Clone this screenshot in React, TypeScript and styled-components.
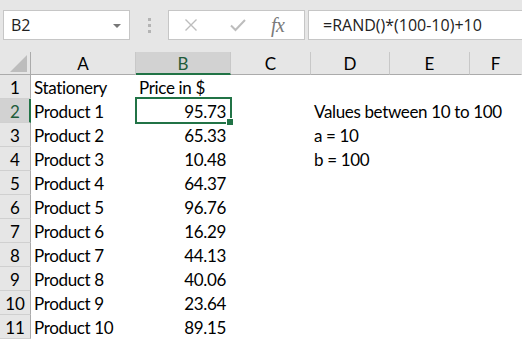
import React from "react";
import styled, { createGlobalStyle, css } from "styled-components";

const Global = createGlobalStyle`
  html, body { margin: 0; padding: 0; background: #ffffff; overflow: hidden; }
  * { box-sizing: border-box; }
`;

const GREEN = "#217346";
const CELL_FONT = `"Lato", "Carlito", "Liberation Sans", sans-serif`;
const UI_FONT = `"Open Sans", "Noto Sans", "Liberation Sans", sans-serif`;

const Frame = styled.div`
  width: 522px;
  height: 342px;
  overflow: hidden;
  background: #ffffff;
  display: flex;
  flex-direction: column;
`;

const TopBar = styled.div`
  height: 52px;
  flex: none;
  background: #e6e6e6;
  display: flex;
  align-items: flex-start;
  padding: 10px 0 0 3px;
`;

const NameBox = styled.div`
  width: 127px;
  height: 30px;
  background: #ffffff;
  border: 1px solid #c6c6c6;
  display: flex;
  align-items: center;
  justify-content: space-between;
  padding: 0 8px 0 7px;
  font-family: ${UI_FONT};
  font-size: 16px;
  color: #222;
`;

const DropArrow = styled.span`
  width: 0;
  height: 0;
  border-left: 4px solid transparent;
  border-right: 4px solid transparent;
  border-top: 4px solid #777;
  margin-top: 1px;
`;

const Dots = styled.div`
  width: 38px;
  height: 30px;
  display: flex;
  flex-direction: column;
  align-items: center;
  justify-content: center;
  gap: 3px;
  & span {
    width: 3px;
    height: 3px;
    background: #b4b4b4;
  }
`;

const IconBox = styled.div`
  width: 137px;
  height: 30px;
  background: #ffffff;
  border: 1px solid #c6c6c6;
  display: flex;
  align-items: center;
  padding-left: 15px;
`;

const IconSlot = styled.div<{ $w: number }>`
  width: ${(p) => p.$w}px;
  display: flex;
  align-items: center;
  justify-content: flex-start;
`;

const Fx = styled.span`
  font-family: "Liberation Serif", "DejaVu Serif", serif;
  font-style: italic;
  font-size: 20px;
  color: #7a7a7a;
  line-height: 1;
  letter-spacing: -0.5px;
  margin-left: -3px;
`;

const FormulaBox = styled.div`
  flex: 1;
  height: 30px;
  margin-left: 3px;
  margin-right: -4px;
  background: #ffffff;
  border: 1px solid #c6c6c6;
  display: flex;
  align-items: center;
  padding-left: 14px;
  font-family: ${UI_FONT};
  font-size: 16px;
  color: #222;
`;

const Grid = styled.div`
  display: grid;
  grid-template-columns: 31px 105px 95px 80px 79px 80px 1fr;
  grid-template-rows: 23px repeat(11, 24px);
  font-family: ${CELL_FONT};
  font-size: 17px;
  color: #000;
`;

const Corner = styled.div`
  background: #e6e6e6;
  border-right: 1px solid #ababab;
  border-bottom: 1px solid #ababab;
  display: flex;
  align-items: flex-end;
  justify-content: flex-end;
  padding: 0 3px 2px 0;
`;

const ColHead = styled.div<{ $sel?: boolean; $last?: boolean }>`
  background: ${(p) => (p.$sel ? "#d2d2d2" : "#e6e6e6")};
  border-right: 1px solid ${(p) => (p.$last ? "transparent" : "#c8c8c8")};
  border-bottom: ${(p) => (p.$sel ? `2px solid ${GREEN}` : "1px solid #ababab")};
  display: flex;
  align-items: center;
  justify-content: center;
  padding-top: ${(p) => (p.$sel ? 1 : 0)}px;
  color: ${(p) => (p.$sel ? "#1f5c3a" : "#000")};
  line-height: 1;
`;

const RowHead = styled.div<{ $sel?: boolean }>`
  background: ${(p) => (p.$sel ? "#d2d2d2" : "#e6e6e6")};
  border-right: ${(p) => (p.$sel ? `2px solid ${GREEN}` : "1px solid #ababab")};
  border-bottom: 1px solid #d0d0d0;
  display: flex;
  align-items: flex-end;
  justify-content: center;
  padding-bottom: 2px;
  padding-left: ${(p) => (p.$sel ? 1 : 0)}px;
  color: ${(p) => (p.$sel ? "#1f5c3a" : "#000")};
  line-height: 1;
`;

const Cell = styled.div<{ $num?: boolean; $sel?: boolean }>`
  position: relative;
  display: flex;
  align-items: flex-end;
  justify-content: ${(p) => (p.$num ? "flex-end" : "flex-start")};
  padding: 0 ${(p) => (p.$num ? 5 : 0)}px 3px ${(p) => (p.$num ? 0 : 3)}px;
  white-space: nowrap;
  line-height: 1;
  letter-spacing: -0.35px;
  overflow: visible;
  ${(p) =>
    p.$sel &&
    css`
      &::after {
        content: "";
        position: absolute;
        left: -1px;
        top: -2px;
        right: -1px;
        bottom: -1px;
        border: 2px solid ${GREEN};
        pointer-events: none;
      }
      &::before {
        content: "";
        position: absolute;
        right: -3px;
        bottom: -3px;
        width: 6px;
        height: 6px;
        background: ${GREEN};
        border: 1px solid #fff;
        z-index: 2;
      }
    `}
`;

const cols = ["A", "B", "C", "D", "E", "F"];

const rows: { a: string; b: string; d?: string }[] = [
  { a: "Stationery", b: "Price in $" },
  { a: "Product 1", b: "95.73", d: "Values between 10 to 100" },
  { a: "Product 2", b: "65.33", d: "a = 10" },
  { a: "Product 3", b: "10.48", d: "b = 100" },
  { a: "Product 4", b: "64.37" },
  { a: "Product 5", b: "96.76" },
  { a: "Product 6", b: "16.29" },
  { a: "Product 7", b: "44.13" },
  { a: "Product 8", b: "40.06" },
  { a: "Product 9", b: "23.64" },
  { a: "Product 10", b: "89.15" },
];

export default function App() {
  return (
    <Frame>
      <Global />
      <TopBar>
        <NameBox>
          <span>B2</span>
          <DropArrow />
        </NameBox>
        <Dots>
          <span />
          <span />
          <span />
        </Dots>
        <IconBox>
          <IconSlot $w={46}>
            <svg width="14" height="14" viewBox="0 0 14 14">
              <path d="M1.5 1.5 L12.5 12.5 M12.5 1.5 L1.5 12.5" stroke="#bdbdbd" strokeWidth="1.4" fill="none" />
            </svg>
          </IconSlot>
          <IconSlot $w={44}>
            <svg width="16" height="14" viewBox="0 0 16 14">
              <path d="M1 7.5 L5.5 12 L15 2" stroke="#bdbdbd" strokeWidth="2" fill="none" />
            </svg>
          </IconSlot>
          <IconSlot $w={24}>
            <Fx>fx</Fx>
          </IconSlot>
        </IconBox>
        <FormulaBox>=RAND()*(100-10)+10</FormulaBox>
      </TopBar>
      <Grid>
        <Corner>
          <svg width="17" height="17" viewBox="0 0 17 17">
            <polygon points="17,0 17,17 0,17" fill="#bdbdbd" />
          </svg>
        </Corner>
        {cols.map((c, i) => (
          <ColHead key={c} $sel={c === "B"} $last={i === cols.length - 1}>
            {c}
          </ColHead>
        ))}
        {rows.map((r, i) => (
          <React.Fragment key={i}>
            <RowHead $sel={i === 1}>{i + 1}</RowHead>
            <Cell>{r.a}</Cell>
            <Cell $num={i > 0} $sel={i === 1}>
              {r.b}
            </Cell>
            <Cell />
            <Cell>{r.d ?? ""}</Cell>
            <Cell />
            <Cell />
          </React.Fragment>
        ))}
      </Grid>
    </Frame>
  );
}
